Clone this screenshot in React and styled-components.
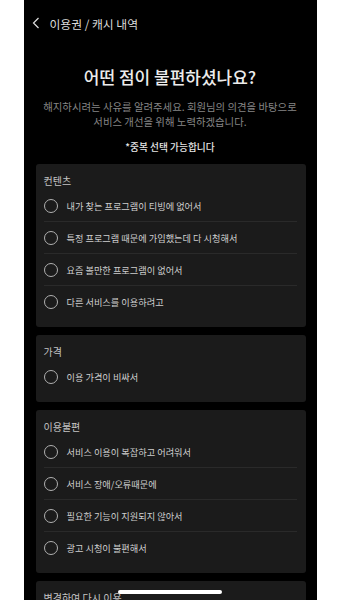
import React from "react";
import styled, { createGlobalStyle } from "styled-components";

const GlobalStyle = createGlobalStyle`
    body {
        margin: 0;
        background: #fff;
        font-family: "Noto Sans CJK KR", "Noto Sans", sans-serif;
    }
`;

const sections = [
    {
        title: "컨텐츠",
        items: [
            "내가 찾는 프로그램이 티빙에 없어서",
            "특정 프로그램 때문에 가입했는데 다 시청해서",
            "요즘 볼만한 프로그램이 없어서",
            "다른 서비스를 이용하려고",
        ],
    },
    {
        title: "가격",
        items: ["이용 가격이 비싸서"],
    },
    {
        title: "이용불편",
        items: [
            "서비스 이용이 복잡하고 어려워서",
            "서비스 장애/오류때문에",
            "필요한 기능이 지원되지 않아서",
            "광고 시청이 불편해서",
        ],
    },
    {
        title: "변경하여 다시 이용",
        items: ["다른 이용권으로 변경하려고", "나중에 다시 이용하려고"],
    },
];

const App = () => {
    return (
        <>
            <GlobalStyle />
            <Phone>
                <Header>
                    <svg width="8" height="12" viewBox="0 0 8 12">
                        <path d="M6.5 1 L1.5 6 L6.5 11" fill="none" stroke="#ddd" strokeWidth="1.2" />
                    </svg>
                    <HeaderTitle>이용권 / 캐시 내역</HeaderTitle>
                </Header>

                <Title>어떤 점이 불편하셨나요?</Title>
                <Desc>
                    해지하시려는 사유를 알려주세요. 회원님의 의견을 바탕으로
                    <br />
                    서비스 개선을 위해 노력하겠습니다.
                </Desc>
                <Note>*중복 선택 가능합니다</Note>

                <Cards>
                    {sections.map((s) => (
                        <Card key={s.title}>
                            <CardTitle>{s.title}</CardTitle>
                            {s.items.map((item) => (
                                <Item key={item}>
                                    <Radio />
                                    <ItemText>{item}</ItemText>
                                </Item>
                            ))}
                        </Card>
                    ))}
                </Cards>
            </Phone>
            <HomeBar />
        </>
    );
};

const Phone = styled.div`
    width: 293px;
    min-height: 600px;
    margin: 0 auto;
    background: #000;
    padding-bottom: 40px;
`;

const Header = styled.div`
    display: flex;
    align-items: center;
    gap: 10px;
    height: 20px;
    padding: 13px 0 0 8px;
`;

const HeaderTitle = styled.span`
    font-size: 11.8px;
    color: #dcdcdc;
`;

const Title = styled.h1`
    margin: 34px 0 0;
    font-size: 17px;
    line-height: 20px;
    font-weight: 500;
    color: #ececec;
    text-align: center;
`;

const Desc = styled.p`
    margin: 12px 0 0;
    font-size: 10.4px;
    line-height: 15px;
    color: #858585;
    text-align: center;
`;

const Note = styled.p`
    margin: 11px 0 0;
    font-size: 9.7px;
    line-height: 14px;
    font-weight: 500;
    color: #e6e6e6;
    text-align: center;
`;

const Cards = styled.div`
    display: flex;
    flex-direction: column;
    gap: 8px;
    margin-top: 10px;
    padding: 0 11px 0 12px;
`;

const Card = styled.div`
    background: #1b1b1b;
    border-radius: 3px;
    padding: 10px 9px 9px 8px;
`;

const CardTitle = styled.div`
    font-size: 10px;
    line-height: 14px;
    color: #c4c4c4;
    margin-bottom: 2px;
`;

const Item = styled.div`
    display: flex;
    align-items: center;
    gap: 9px;
    height: 32px;
    box-sizing: border-box;
    border-bottom: 1px solid #2a2a2a;

    &:last-child {
        border-bottom: none;
    }
`;

const Radio = styled.span`
    width: 14px;
    height: 14px;
    box-sizing: border-box;
    border: 1px solid #b0b0b0;
    border-radius: 50%;
    flex-shrink: 0;
`;

const ItemText = styled.span`
    font-size: 9.2px;
    color: #cfcfcf;
`;

const HomeBar = styled.div`
    position: fixed;
    left: 118px;
    top: 590px;
    width: 104px;
    height: 4px;
    border-radius: 2px;
    background: #fff;
`;

export default App;
